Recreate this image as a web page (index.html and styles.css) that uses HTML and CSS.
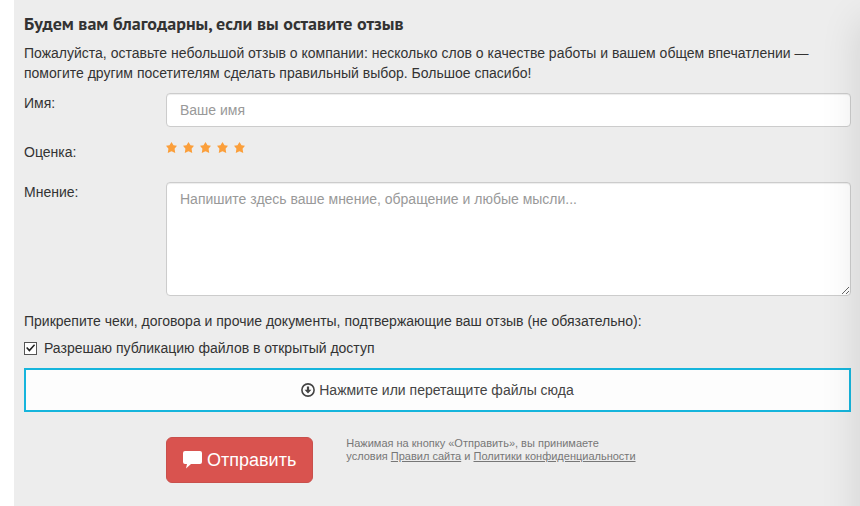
FILE: index.html
```html
<!DOCTYPE html>
<html lang="ru">

<head>
    <meta charset="utf-8">
    <title>Оставить отзыв</title>
    <link rel="stylesheet" href="styles.css">
</head>

<body>
    <form class="review">
        <h2 class="review-title">Будем вам благодарны, если вы оставите отзыв</h2>
        <p class="intro">Пожалуйста, оставьте небольшой отзыв о компании: несколько слов о качестве работы и вашем общем впечатлении — помогите другим посетителям сделать правильный выбор. Большое спасибо!</p>

        <div class="row">
            <label for="name">Имя:</label>
            <input class="form-control" type="text" id="name" placeholder="Ваше имя">
        </div>

        <div class="row row-rating">
            <span id="ratingLabel">Оценка:</span>
            <div class="stars" role="radiogroup" aria-labelledby="ratingLabel">
                <input type="radio" name="rating" value="1" aria-label="1">
                <input type="radio" name="rating" value="2" aria-label="2">
                <input type="radio" name="rating" value="3" aria-label="3">
                <input type="radio" name="rating" value="4" aria-label="4">
                <input type="radio" name="rating" value="5" aria-label="5" checked>
            </div>
        </div>

        <div class="row">
            <label for="opinion">Мнение:</label>
            <textarea class="form-control" id="opinion" placeholder="Напишите здесь ваше мнение, обращение и любые мысли..."></textarea>
        </div>

        <p class="attach">Прикрепите чеки, договора и прочие документы, подтвержающие ваш отзыв (не обязательно):</p>
        <div class="checkbox">
            <input type="checkbox" id="public" checked>
            <label for="public">Разрешаю публикацию файлов в открытый доступ</label>
        </div>

        <button type="button" class="dropzone">
            <svg width="14" height="14" viewBox="0 0 14 14" aria-hidden="true">
                <circle cx="7" cy="7" r="6.1" fill="none" stroke="currentColor" stroke-width="1.6"/>
                <path d="M5.9 3.4h2.2v3.3h2.3L7 10.6 3.6 6.7h2.3z" fill="currentColor"/>
            </svg>
            <span>Нажмите или перетащите файлы сюда</span>
        </button>

        <div class="row submit">
            <div class="submit-body">
                <button type="submit" class="btn-send">
                    <svg width="19" height="18" viewBox="0 0 19 18" aria-hidden="true">
                        <path d="M2 0h15a2 2 0 0 1 2 2v9a2 2 0 0 1-2 2H8l-5 4.5L4 13H2a2 2 0 0 1-2-2V2a2 2 0 0 1 2-2z" fill="currentColor"/>
                    </svg>
                    <span>Отправить</span>
                </button>
                <p class="terms">Нажимая на кнопку «Отправить», вы принимаете<br>условия <a href="#">Правил сайта</a> и <a href="#">Политики конфиденциальности</a></p>
            </div>
        </div>
    </form>
    <div class="side-shadow"></div>
</body>

</html>
```

FILE: styles.css
```css
* {
    box-sizing: border-box;
}

body {
    margin: 0;
    background: #fff;
    color: #333;
    font-family: "Liberation Sans", Arial, sans-serif;
    font-size: 14px;
    line-height: 20px;
}

p {
    margin: 0;
}

.review {
    min-height: 100vh;
    margin-left: 14px;
    padding: 14px 9px 20px 10px;
    background: #ededed;
}

.review-title {
    margin: 0 0 9px;
    font-family: "PT Sans", "Noto Sans", sans-serif;
    font-size: 18px;
    font-weight: 600;
    line-height: 20px;
}

.intro {
    margin-bottom: 10px;
}

.row {
    display: grid;
    grid-template-columns: 142px 1fr;
    align-items: start;
    margin-bottom: 15px;
}

.row-rating {
    margin-bottom: 20px;
}

.form-control {
    display: block;
    width: 100%;
    height: 34px;
    padding: 6px 13px;
    border: 1px solid #ccc;
    border-radius: 4px;
    background: #fff;
    box-shadow: inset 0 1px 1px rgba(0, 0, 0, 0.075);
    color: #555;
    font: inherit;
}

.form-control::placeholder {
    color: #999;
    opacity: 1;
}

textarea.form-control {
    height: 114px;
    resize: vertical;
}

.stars {
    display: flex;
    gap: 6px;
}

.stars input {
    appearance: none;
    width: 11px;
    height: 11px;
    margin: 0;
    background: #fb9f3b;
    clip-path: polygon(50% 0, 68% 30%, 100% 35%, 78% 62%, 84% 100%, 50% 84%, 16% 100%, 22% 62%, 0 35%, 32% 30%);
    cursor: pointer;
}

.attach {
    margin-bottom: 7px;
}

.checkbox {
    display: flex;
    align-items: center;
    gap: 7px;
    margin-bottom: 10px;
}

.checkbox input {
    appearance: none;
    width: 13px;
    height: 13px;
    margin: 0;
    border: 1px solid #555;
    background: #fff;
}

.checkbox input:checked::before {
    content: "";
    display: block;
    width: 11px;
    height: 11px;
    background: #222;
    clip-path: polygon(10% 50%, 20% 40%, 40% 62%, 82% 16%, 92% 26%, 40% 84%);
}

.dropzone {
    display: flex;
    align-items: center;
    justify-content: center;
    gap: 4px;
    width: 100%;
    height: 44px;
    margin-bottom: 25px;
    border: 2px solid #16b5dc;
    background: #fdfdfd;
    color: #444;
    font: inherit;
    cursor: pointer;
}

.submit-body {
    display: flex;
    grid-column: 2;
    gap: 33px;
}

.btn-send {
    display: flex;
    align-items: center;
    gap: 5px;
    height: 46px;
    padding: 0 16px;
    border: 1px solid #c9504c;
    border-radius: 6px;
    background: #d9534f;
    color: #fff;
    font: inherit;
    font-size: 18px;
    cursor: pointer;
}

.terms {
    color: #777;
    font-size: 11px;
    line-height: 13px;
}

.terms a {
    color: inherit;
    text-decoration: underline;
}

/* soft shade along the right edge, over the form */
.side-shadow {
    position: fixed;
    top: 20px;
    bottom: -50px;
    left: 100%;
    width: 50px;
    box-shadow: 0 0 40px rgba(0, 0, 0, 0.12);
    pointer-events: none;
}
```
